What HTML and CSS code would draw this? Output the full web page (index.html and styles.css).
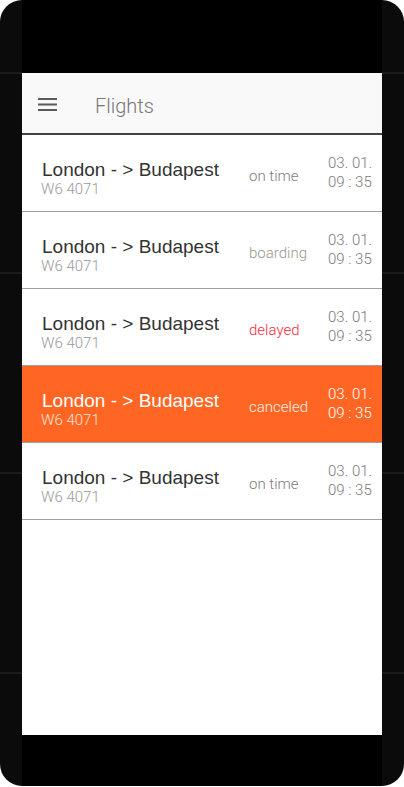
FILE: index.html
```html
<!DOCTYPE html>
<html>
<head>
<meta charset="utf-8">
<link rel="stylesheet" href="styles.css">
</head>
<body>
<div class="phone">
  <div class="bezel">
    <div class="screen">
      <header class="appbar">
        <svg class="menu" width="19" height="13" viewBox="0 0 19 13"><rect x="0" y="0" width="19" height="2" fill="#5a5a5a"/><rect x="0" y="5.5" width="19" height="2" fill="#5a5a5a"/><rect x="0" y="11" width="19" height="2" fill="#5a5a5a"/></svg>
        <h1 class="title">Flights</h1>
      </header>
      <ul class="list">
        <li class="row">
          <div class="route"><div class="cities">London - &gt; Budapest</div><div class="code">W6 4071</div></div>
          <div class="status">on time</div>
          <div class="when"><div>03. 01.</div><div>09 : 35</div></div>
        </li>
        <li class="row">
          <div class="route"><div class="cities">London - &gt; Budapest</div><div class="code">W6 4071</div></div>
          <div class="status boarding">boarding</div>
          <div class="when"><div>03. 01.</div><div>09 : 35</div></div>
        </li>
        <li class="row">
          <div class="route"><div class="cities">London - &gt; Budapest</div><div class="code">W6 4071</div></div>
          <div class="status delayed">delayed</div>
          <div class="when"><div>03. 01.</div><div>09 : 35</div></div>
        </li>
        <li class="row active">
          <div class="route"><div class="cities">London - &gt; Budapest</div><div class="code">W6 4071</div></div>
          <div class="status">canceled</div>
          <div class="when"><div>03. 01.</div><div>09 : 35</div></div>
        </li>
        <li class="row">
          <div class="route"><div class="cities">London - &gt; Budapest</div><div class="code">W6 4071</div></div>
          <div class="status">on time</div>
          <div class="when"><div>03. 01.</div><div>09 : 35</div></div>
        </li>
      </ul>
    </div>
  </div>
</div>
</body>
</html>
```
FILE: styles.css
```css
html, body {
  margin: 0;
  padding: 0;
  background: #fff;
}
.phone {
  width: 404px;
  height: 786px;
  border-radius: 22px;
  overflow: hidden;
  background: repeating-linear-gradient(to bottom, #0b0b0b 0 72px, #1c1c1c 72px 74px, #0b0b0b 74px 200px);
}
.bezel {
  margin: 0 22px;
  height: 100%;
  box-sizing: border-box;
  padding: 73px 0 51px;
  background: #000;
}
.screen {
  height: 662px;
  background: #fff;
  overflow: hidden;
}
.appbar {
  height: 60px;
  border-bottom: 2px solid #444;
  background: #f9f9f9;
  display: flex;
  align-items: center;
  padding-left: 16px;
}
.menu {
  display: block;
  margin-top: 2px;
}
.title {
  margin: 6px 0 0 38px;
  font-family: Roboto, sans-serif;
  font-weight: 300;
  font-size: 20px;
  color: #777;
  line-height: 24px;
}
.list {
  list-style: none;
  margin: 0;
  padding: 0;
}
.row {
  height: 76px;
  border-bottom: 1px solid #9e9e9e;
  display: flex;
  align-items: center;
  padding-left: 20px;
  background: #fff;
}
.route {
  flex: 1;
  margin-top: 12px;
}
.cities {
  font-family: "Liberation Sans", Arial, sans-serif;
  font-size: 19px;
  line-height: 20px;
  color: #333;
}
.code {
  font-family: Roboto, sans-serif;
  font-weight: 300;
  font-size: 15px;
  line-height: 19px;
  color: #9a9a9a;
  margin-left: -1px;
}
.status {
  width: 79px;
  margin-top: 7px;
  font-family: Roboto, sans-serif;
  font-weight: 300;
  font-size: 15px;
  line-height: 19px;
  color: #7c7c7c;
}
.status.boarding {
  color: #9a968f;
}
.status.delayed {
  color: #ff1f3d;
}
.when {
  width: 54px;
  font-family: Roboto, sans-serif;
  font-weight: 300;
  font-size: 15px;
  line-height: 19px;
  color: #7a7a7a;
}
.row.active {
  background: #ff6624;
}
.row.active .cities,
.row.active .when {
  color: #fff;
}
.row.active .code {
  color: #ffe4da;
}
.row.active .status {
  color: #fff0ea;
}
```
